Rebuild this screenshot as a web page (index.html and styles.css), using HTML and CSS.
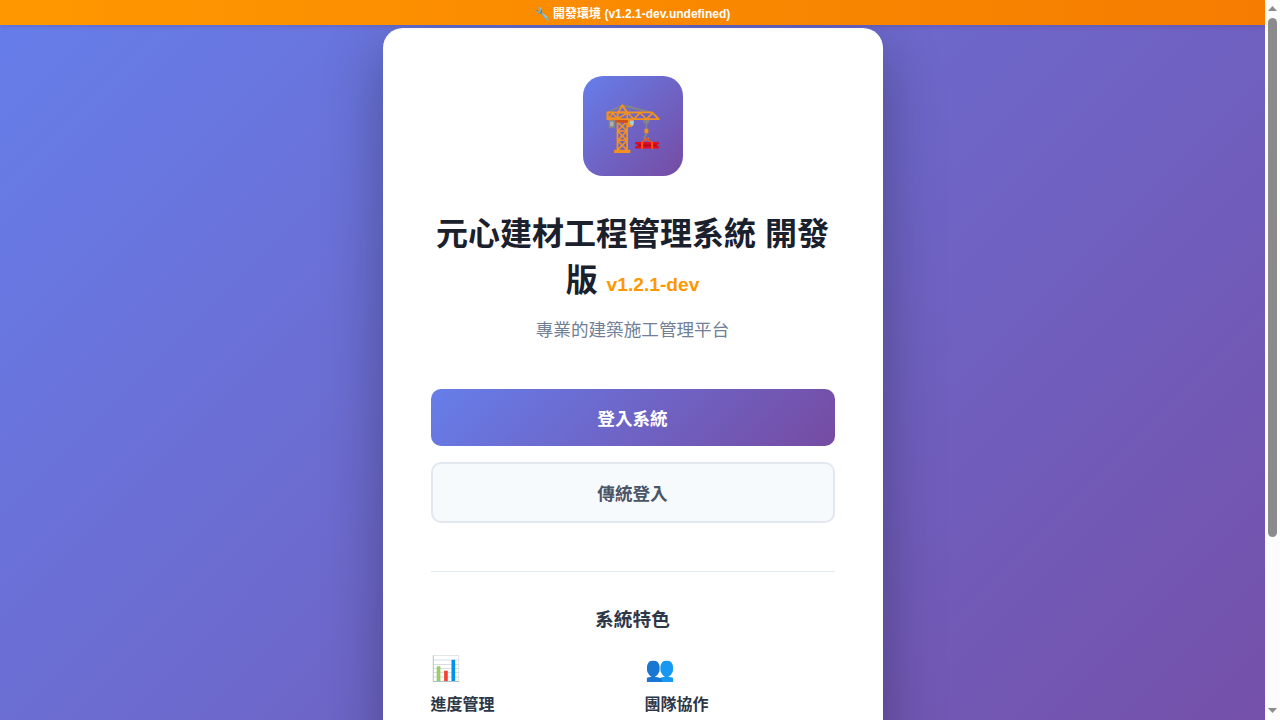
FILE: index.html
```html
<!DOCTYPE html>
<html lang="zh-TW">
<head>
<meta charset="utf-8">
<title>元心建材工程管理系統</title>
<link rel="stylesheet" href="styles.css">
</head>
<body>
<div class="window">
  <div class="page">
    <div class="env-banner">🔧 開發環境 (v1.2.1-dev.undefined)</div>
    <main class="card">
      <div class="logo">🏗️</div>
      <h1 class="title">元心建材工程管理系統 開發版 <span class="version">v1.2.1-dev</span></h1>
      <p class="subtitle">專業的建築施工管理平台</p>
      <div class="buttons">
        <a class="btn primary">登入系統</a>
        <a class="btn secondary">傳統登入</a>
      </div>
      <section class="features">
        <h3 class="features-title">系統特色</h3>
        <div class="grid">
          <div class="feature"><div class="icon">📊</div><div class="name">進度管理</div></div>
          <div class="feature"><div class="icon">👥</div><div class="name">團隊協作</div></div>
        </div>
      </section>
    </main>
  </div>
  <div class="scrollbar">
    <svg class="arrow" width="9" height="5" viewBox="0 0 9 5"><path d="M4.5 0L9 5H0z"/></svg>
    <div class="thumb"></div>
    <svg class="arrow down" width="9" height="5" viewBox="0 0 9 5"><path d="M0 0h9L4.5 5z"/></svg>
  </div>
</div>
</body>
</html>
```
FILE: styles.css
```css
* { margin: 0; padding: 0; box-sizing: border-box; }
body {
  font-family: "Liberation Sans", "Noto Sans CJK TC", sans-serif;
  overflow: hidden;
}
.window {
  display: flex;
  height: 720px;
  overflow: hidden;
}
.page {
  position: relative;
  flex: 1;
  height: 948px;
  padding: 28px 20px 20px;
  display: flex;
  justify-content: center;
  background: linear-gradient(135deg, #667eea 0%, #764ba2 100%);
}
.env-banner {
  position: absolute; top: 0; left: 0; right: 0;
  z-index: 1;
  height: 25px;
  padding-top: 4px;
  background: linear-gradient(90deg, #ff9800, #f57c00);
  color: #fff;
  font-size: 12px;
  font-weight: bold;
  text-align: center;
  box-shadow: 0 2px 4px rgba(0,0,0,.1);
}
.card {
  width: 500px;
  height: 900px;
  padding: 48px;
  background: #fff;
  border-radius: 20px;
  box-shadow: 0 20px 60px rgba(0,0,0,.3);
  text-align: center;
}
.logo {
  width: 100px; height: 100px;
  margin: 0 auto 32px;
  border-radius: 20px;
  background: linear-gradient(135deg, #667eea, #764ba2);
  display: flex; align-items: center; justify-content: center;
  font-size: 48px;
}
.title { font-size: 32px; color: #1a202c; margin-bottom: 16px; }
.version { font-size: 0.6em; color: #ff9800; }
.subtitle { font-size: 17.6px; color: #718096; margin-bottom: 48px; }
.buttons { display: flex; flex-direction: column; gap: 16px; margin-bottom: 48px; }
.btn { display: block; padding: 16px; border-radius: 10px; font-size: 17.6px; font-weight: 600; }
.primary { background: linear-gradient(135deg, #667eea, #764ba2); color: #fff; }
.secondary { background: #f7fafc; color: #4a5568; border: 2px solid #e2e8f0; }
.features { border-top: 1px solid #e2e8f0; padding-top: 32px; }
.features-title { font-size: 18.72px; color: #2d3748; margin-bottom: 24px; }
.grid { display: grid; grid-template-columns: 1fr 1fr; gap: 24px; text-align: left; }
.icon { font-size: 24px; margin-bottom: 8px; }
.name { font-size: 16px; font-weight: 600; color: #2d3748; }
.scrollbar {
  width: 15px;
  height: 720px;
  padding: 6px 3px 7px;
  background: #fcfcfc;
  display: flex;
  flex-direction: column;
}
.arrow { display: block; fill: #8b8b8b; flex: none; }
.thumb { height: 519px; margin-top: 7px; border-radius: 5px; background: #8b8b8b; width: 9px; }
.down { margin-top: auto; }
```
